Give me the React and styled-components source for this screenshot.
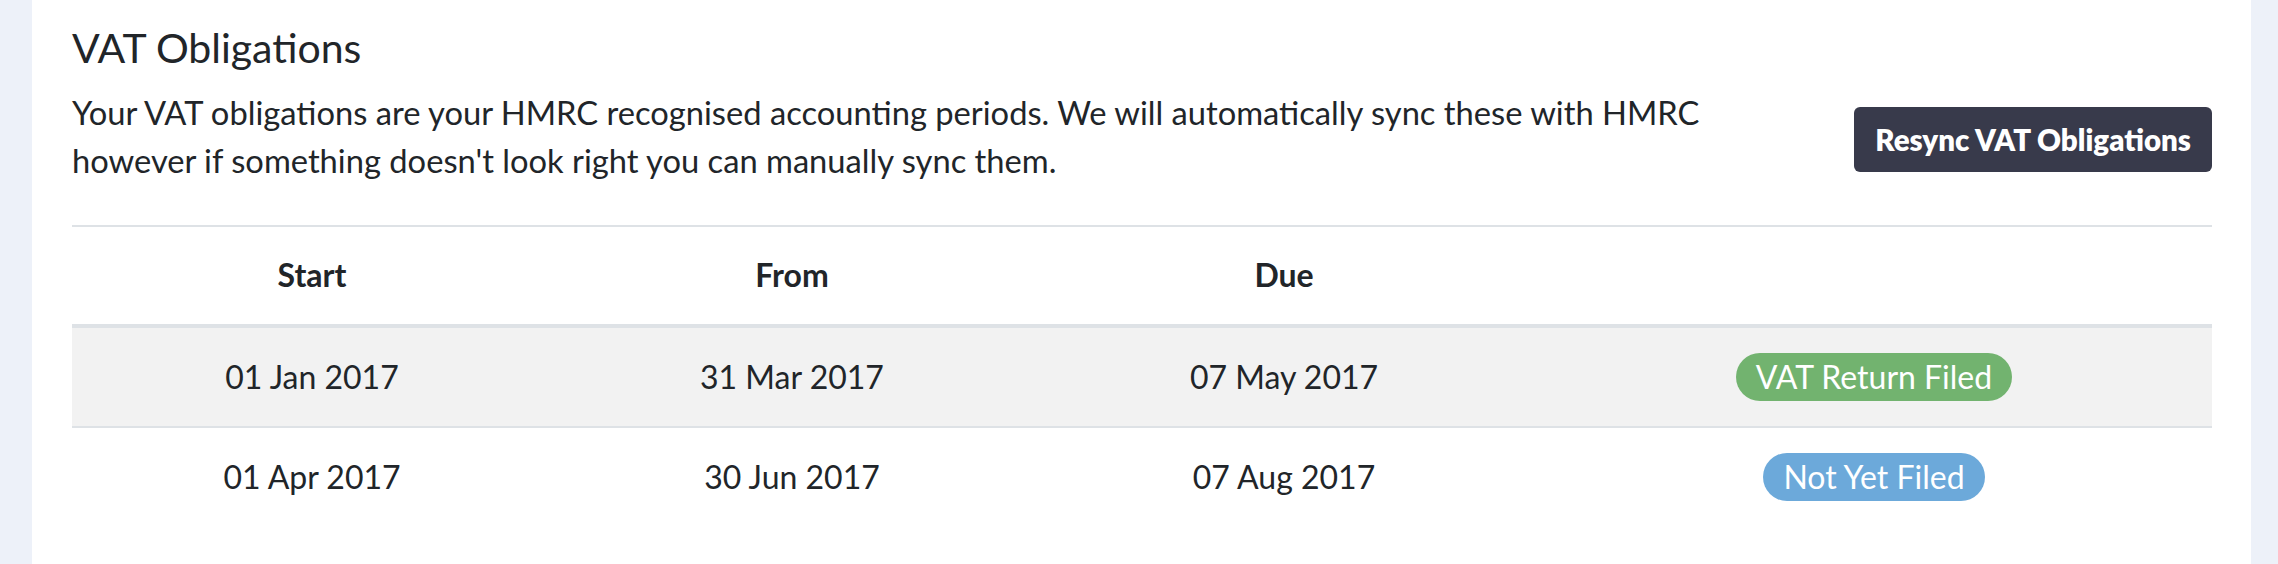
import React from "react";
import styled, { createGlobalStyle } from "styled-components";

const GlobalStyle = createGlobalStyle`
  html, body {
    margin: 0;
    padding: 0;
    background: #edf1f9;
    font-family: Lato, "Open Sans", sans-serif;
    color: #212529;
  }
`;

const Page = styled.div`
  display: flex;
  padding: 0 27px 0 32px;
  min-height: 564px;
  box-sizing: border-box;
`;

const Card = styled.section`
  flex: 1;
  background: #ffffff;
  padding: 24px 39px 36px 40px;
  box-sizing: border-box;
`;

const Title = styled.h2`
  margin: 0 0 17px;
  font-size: 41px;
  line-height: 48px;
  font-weight: 400;
  color: #212529;
`;

const Intro = styled.div`
  display: flex;
  align-items: center;
  justify-content: space-between;
  margin-bottom: 40px;
`;

const Description = styled.p`
  margin: 0;
  font-size: 32.7px;
  line-height: 48px;
`;

const Button = styled.button`
  height: 65px;
  padding: 0 21px;
  margin-top: 4px;
  border: none;
  border-radius: 6px;
  background: #383a4b;
  color: #ffffff;
  font-family: Lato, sans-serif;
  font-weight: 800;
  font-size: 29.5px;
  cursor: pointer;
`;

const Table = styled.table`
  width: 100%;
  border-collapse: collapse;
  font-size: 32px;
  line-height: 48px;
`;

const Th = styled.th`
  padding: 24px 0 25px;
  border-top: 2px solid #dee2e6;
  border-bottom: 4px solid #dee2e6;
  font-weight: 700;
  text-align: center;
`;

const Row = styled.tr`
  background: ${(p) => (p.$striped ? "#f2f2f2" : "transparent")};
`;

const Td = styled.td`
  padding: 25px 0;
  text-align: center;
  border-top: ${(p) => (p.$first ? "none" : "2px solid #dee2e6")};
`;

const Badge = styled.span`
  display: inline-block;
  padding: 0 20px;
  height: 48px;
  line-height: 48px;
  border-radius: 24px;
  color: #ffffff;
  background: ${(p) => (p.$filed ? "#72b36f" : "#6ca9da")};
  vertical-align: top;
`;

const obligations = [
  { start: "01 Jan 2017", end: "31 Mar 2017", due: "07 May 2017", filed: true },
  { start: "01 Apr 2017", end: "30 Jun 2017", due: "07 Aug 2017", filed: false },
];

export default function App() {
  return (
    <>
      <GlobalStyle />
      <Page>
        <Card>
          <Title>VAT Obligations</Title>
          <Intro>
            <Description>
              Your VAT obligations are your HMRC recognised accounting periods. We will
              automatically sync these with HMRC
              <br />
              however if something doesn't look right you can manually sync them.
            </Description>
            <Button>Resync VAT Obligations</Button>
          </Intro>
          <Table>
            <colgroup>
              <col style={{ width: "480px" }} />
              <col style={{ width: "480px" }} />
              <col style={{ width: "504px" }} />
              <col />
            </colgroup>
            <thead>
              <tr>
                <Th>Start</Th>
                <Th>From</Th>
                <Th>Due</Th>
                <Th />
              </tr>
            </thead>
            <tbody>
              {obligations.map((o, i) => (
                <Row key={o.start} $striped={i % 2 === 0}>
                  <Td $first={i === 0}>{o.start}</Td>
                  <Td $first={i === 0}>{o.end}</Td>
                  <Td $first={i === 0}>{o.due}</Td>
                  <Td $first={i === 0}>
                    <Badge $filed={o.filed}>
                      {o.filed ? "VAT Return Filed" : "Not Yet Filed"}
                    </Badge>
                  </Td>
                </Row>
              ))}
            </tbody>
          </Table>
        </Card>
      </Page>
    </>
  );
}
